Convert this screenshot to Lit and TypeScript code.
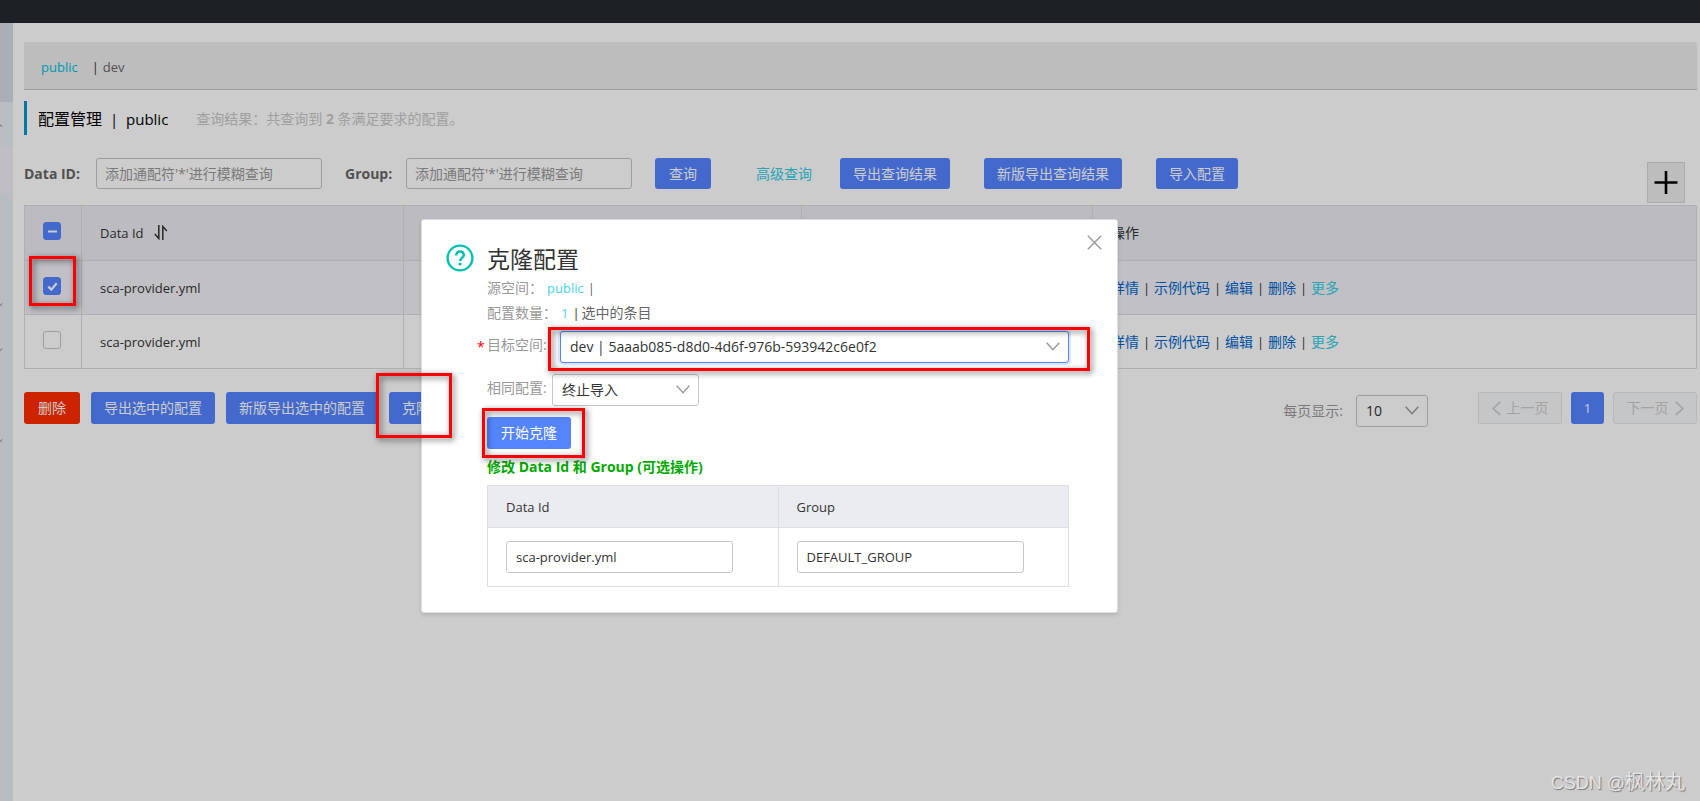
import { LitElement, html, css, svg } from "lit";
import { customElement, property, state } from "lit/decorators.js";

@customElement("drop-down")
class DropDown extends LitElement {
  @property() label = "";
  @property() value = "";
  @property({ type: Boolean, reflect: true }) active = false;

  static styles = css`
    :host {
      display: block;
      position: relative;
      height: 32px;
      box-sizing: border-box;
    }
    .field {
      width: 100%;
      height: 100%;
      box-sizing: border-box;
      appearance: none;
      border: 1px solid #c4c6cf;
      border-radius: 3px;
      background: #fff;
      color: #333;
      padding: 0 32px 0 9px;
      font: inherit;
      outline: none;
    }
    :host([active]) .field {
      border-color: #5584ff;
      box-shadow: 0 0 0 2px rgba(85, 132, 255, 0.2);
    }
    .arrow {
      position: absolute;
      right: 9px;
      top: 50%;
      margin-top: -5px;
      pointer-events: none;
    }
  `;

  render() {
    return html`
      <select class="field" aria-label=${this.label}>
        <option>${this.value}</option>
      </select>
      <svg class="arrow" width="14" height="9" viewBox="0 0 14 9" fill="none" stroke="#999" stroke-width="1.4">
        <path d="M.7.7 7 7.8 13.3.7" />
      </svg>
    `;
  }
}

@customElement("clone-dialog")
class CloneDialog extends LitElement {
  static styles = css`
    :host {
      display: block;
      box-sizing: border-box;
      background: #fff;
      border: 1px solid #dcdee3;
      border-radius: 3px;
      box-shadow: 0 2px 4px rgba(0, 0, 0, 0.12);
      padding: 23px 48px 25px 24px;
    }
    .layout {
      display: flex;
      gap: 13px;
    }
    .icon {
      flex: none;
      margin-top: 1px;
    }
    .content {
      flex: 1;
      min-width: 0;
    }
    .title {
      margin: 0;
      font-size: 23px;
      line-height: 32px;
      font-weight: 400;
      color: #333;
    }
    .row {
      display: flex;
      align-items: center;
      height: 26px;
      color: #666;
    }
    .row.count {
      height: 24px;
    }
    .row.target {
      height: 44px;
    }
    .row.same {
      height: 42px;
    }
    .name {
      color: #999;
      width: 60px;
    }
    .name.wide {
      width: 74px;
    }
    .name.target-name {
      width: 73px;
      padding-bottom: 4px;
    }
    .name.same-name {
      width: 65px;
      padding-bottom: 4px;
    }
    .star {
      width: 10px;
      margin-left: -10px;
      color: #f00;
      font-size: 14px;
    }
    .cyan {
      color: #49d2e7;
      font-size: 13px;
      margin-right: 4px;
    }
    .bar {
      width: 9px;
      font-size: 13px;
    }
    .bar.dark {
      color: #333;
    }
    .grow {
      flex: 1;
      font-size: 14px;
    }
    .short {
      width: 147px;
    }
    .primary {
      display: block;
      height: 32px;
      margin-top: 6px;
      padding: 0 14px;
      border: 0;
      border-radius: 3px;
      background: #5584ff;
      color: #fff;
      font: inherit;
    }
    .note {
      height: 36px;
      line-height: 36px;
      font-weight: 700;
      color: #0a0;
    }
    .grid {
      width: 100%;
      table-layout: fixed;
      border-collapse: collapse;
      font-size: 13px;
      color: #333;
    }
    .grid th,
    .grid td {
      border: 1px solid #dcdee3;
      padding: 0 18px;
      text-align: left;
      font-weight: 400;
    }
    .grid th {
      height: 41px;
      background: #ebecf0;
    }
    .grid td {
      height: 58px;
    }
    .text {
      display: block;
      box-sizing: border-box;
      width: 227px;
      height: 32px;
      border: 1px solid #c4c6cf;
      border-radius: 3px;
      padding: 0 9px;
      color: #333;
      font: inherit;
    }
    .close {
      position: absolute;
      top: 15px;
      right: 15px;
      width: 15px;
      height: 15px;
      padding: 0;
      border: 0;
      background: none;
    }
    .close svg {
      display: block;
    }
  `;

  render() {
    return html`
      <button class="close" aria-label="关闭">
        <svg width="15" height="15" viewBox="0 0 15 15" stroke="#999" stroke-width="1.4">
          <path d="M.8.8 14.2 14.2M14.2.8.8 14.2" />
        </svg>
      </button>
      <div class="layout">
        <svg class="icon" width="28" height="28" viewBox="0 0 28 28" fill="none" stroke="#00c1b6">
          <circle cx="14" cy="14" r="12.4" stroke-width="2.4" />
          <path d="M10.2 11.4c0-2.4 1.6-3.9 3.8-3.9s3.8 1.5 3.8 3.5c0 2.8-3.6 2.9-3.6 6" stroke-width="2.5" />
          <circle cx="14.1" cy="20" r="1.6" fill="#00c1b6" stroke="none" />
        </svg>
        <div class="content">
          <h2 class="title">克隆配置</h2>
          <div class="row">
            <span class="name">源空间：</span><span class="cyan">public</span><span class="bar">|</span>
          </div>
          <div class="row count">
            <span class="name wide">配置数量：</span><span class="cyan">1</span><span class="bar dark">|</span>
            <span>选中的条目</span>
          </div>
          <div class="row target">
            <span class="star">*</span><span class="name target-name">目标空间:</span>
            <drop-down class="grow" active label="目标空间" value="dev | 5aaab085-d8d0-4d6f-976b-593942c6e0f2"></drop-down>
          </div>
          <div class="row same">
            <span class="name same-name">相同配置:</span>
            <drop-down class="short" label="相同配置" value="终止导入"></drop-down>
          </div>
          <button class="primary">开始克隆</button>
          <div class="note">修改 Data Id 和 Group (可选操作)</div>
          <table class="grid">
            <thead>
              <tr><th>Data Id</th><th>Group</th></tr>
            </thead>
            <tbody>
              <tr>
                <td><input class="text" aria-label="Data Id" .value=${"sca-provider.yml"} /></td>
                <td><input class="text" aria-label="Group" .value=${"DEFAULT_GROUP"} /></td>
              </tr>
            </tbody>
          </table>
        </div>
      </div>
    `;
  }
}

@customElement("app-root")
class AppRoot extends LitElement {
  @state() rows = [
    { id: "sca-provider.yml", checked: true },
    { id: "sca-provider.yml", checked: false },
  ];

  static styles = css`
    :host {
      display: flex;
      flex-direction: column;
      position: relative;
      min-height: 100vh;
      overflow: hidden;
      background: #fff;
      color: #333;
      font: 14px/20px "Open Sans", "Noto Sans CJK SC", sans-serif;
    }
    .top {
      height: 23px;
      background: #252a2f;
    }
    .body {
      flex: 1;
      display: flex;
    }
    .side {
      flex: none;
      width: 13px;
      background: #e6edf1;
    }
    .band {
      height: 45px;
      background: #e7eef2;
    }
    .band.head {
      height: 79px;
      background: #d4dbe2;
    }
    .band.current {
      height: 46px;
      background: #f0eef4;
    }
    .caret {
      position: absolute;
      left: 0;
    }
    .main {
      flex: 1;
      min-width: 0;
      padding: 19px 3px 0 11px;
    }
    .spaces {
      display: flex;
      align-items: center;
      box-sizing: border-box;
      height: 48px;
      padding: 3px 17px 0;
      background: #ededed;
      border-bottom: 1px solid #c7c7c7;
      font-size: 13px;
    }
    .spaces a {
      color: #666;
      text-decoration: none;
    }
    .spaces .on {
      color: #00c1de;
      margin-right: 14px;
    }
    .spaces .bar {
      width: 11px;
      color: #333;
    }
    .heading {
      display: flex;
      align-items: center;
      box-sizing: border-box;
      height: 34px;
      margin: 11px 0 23px;
      padding: 2px 0 0 11px;
      border-left: 3px solid #09c;
    }
    .heading h1 {
      display: flex;
      margin: 0;
      font-size: 16px;
      line-height: 24px;
      font-weight: 400;
      color: #000;
    }
    .heading .bar {
      width: 24px;
      text-align: center;
      font-size: 15px;
    }
    .heading .space {
      font-size: 15px;
    }
    .result {
      margin-left: 28px;
      color: #c8c8c8;
    }
    .search {
      display: flex;
      align-items: center;
      height: 31px;
      margin-bottom: 16px;
    }
    .search label {
      font-weight: 700;
      color: #666;
      width: 72px;
    }
    .search .group {
      width: 61px;
      margin-left: 23px;
    }
    .search input {
      box-sizing: border-box;
      width: 226px;
      height: 31px;
      padding: 0 8px;
      border: 1px solid #c4c6cf;
      border-radius: 3px;
      font: inherit;
      background: #fff;
    }
    .search input::placeholder {
      color: #999;
    }
    .btn {
      height: 32px;
      padding: 0 13px;
      border: 0;
      border-radius: 3px;
      background: #5584ff;
      color: #fff;
      font: inherit;
      white-space: nowrap;
    }
    .search .btn {
      height: 31px;
    }
    .search .query {
      padding: 0 14px;
      margin-left: 23px;
    }
    .more-link {
      color: #33cde5;
      text-decoration: none;
      margin: 0 28px 0 45px;
    }
    .search .wide-gap {
      margin-left: 34px;
    }
    .btn.danger {
      padding: 0 14px;
      background: #ff2d00;
    }
    .add {
      box-sizing: border-box;
      width: 38px;
      height: 41px;
      margin: 18px 12px 0 auto;
      padding: 0;
      display: grid;
      place-items: center;
      border: 1px solid #d6d6d6;
      background: #ededed;
    }
    .list {
      width: 100%;
      table-layout: fixed;
      border-collapse: collapse;
      font-size: 13px;
    }
    .list th,
    .list td {
      border: 1px solid #dcdcdf;
      padding: 0 18px;
      height: 53px;
      text-align: left;
      font-weight: 400;
      white-space: nowrap;
    }
    .list th {
      height: 54px;
      background: #ebecf0;
    }
    .list .picked td {
      background: #f2f1f7;
    }
    .c1 {
      width: 57px;
    }
    .c2 {
      width: 322px;
    }
    .c3 {
      width: 398px;
    }
    .c4 {
      width: 291px;
    }
    .sort {
      margin-left: 7px;
      vertical-align: -2px;
    }
    .box {
      appearance: none;
      display: block;
      box-sizing: border-box;
      width: 18px;
      height: 18px;
      margin: 0 0 4px;
      border: 1px solid #c4c6cf;
      border-radius: 3px;
      background: #fff;
    }
    .tick {
      display: grid;
    }
    .tick > * {
      grid-area: 1 / 1;
    }
    .tick svg {
      pointer-events: none;
    }
    .box:checked,
    .box:indeterminate {
      border-color: #5584ff;
      background: #5584ff;
    }
    .ops {
      display: flex;
      font-size: 14px;
    }
    .ops a {
      color: #06c;
      text-decoration: none;
    }
    .ops .more {
      color: #33cde5;
    }
    .ops span {
      width: 15px;
      text-align: center;
      font-size: 13px;
    }
    .ops-head {
      font-size: 14px;
    }
    .footer {
      display: flex;
      gap: 11px;
      margin-top: 23px;
    }
    .pager {
      display: flex;
      gap: 9px;
      margin-left: auto;
    }
    .size {
      display: flex;
      align-items: center;
      gap: 13px;
      height: 32px;
      margin: 3px 41px 0 0;
      color: #999;
    }
    .size drop-down {
      width: 72px;
      font-size: 14px;
    }
    .turn {
      display: flex;
      align-items: center;
      justify-content: center;
      gap: 6px;
      box-sizing: border-box;
      width: 84px;
      height: 32px;
      padding: 0;
      border: 1px solid #e6e7eb;
      border-radius: 3px;
      background: #f7f8fa;
      color: #ccc;
      font: inherit;
    }
    .page {
      width: 33px;
      padding: 0;
      font-size: 13px;
    }
    .mask {
      position: absolute;
      inset: 0;
      background: rgba(0, 0, 0, 0.2);
    }
    .dialog {
      position: absolute;
      left: 421px;
      top: 219px;
      width: 697px;
    }
    .mark {
      position: absolute;
      box-sizing: border-box;
      border: 3px solid #f00;
      filter: drop-shadow(2px 2px 3px rgba(0, 0, 0, 0.6));
      pointer-events: none;
    }
    .m1 {
      left: 29px;
      top: 256px;
      width: 47px;
      height: 50px;
    }
    .m2 {
      left: 376px;
      top: 373px;
      width: 76px;
      height: 65px;
    }
    .m3 {
      left: 548px;
      top: 327px;
      width: 542px;
      height: 44px;
    }
    .m4 {
      left: 482px;
      top: 408px;
      width: 103px;
      height: 50px;
    }
    .credit {
      position: absolute;
      right: 15px;
      bottom: 5px;
      font: 18px/26px "Liberation Sans", "Noto Sans CJK SC", sans-serif;
      color: #e4e4e4;
      text-shadow: 1px 1px 1px #777;
    }
    .credit span {
      font-size: 20px;
    }
  `;

  private caret(y: number, up = false) {
    return html`<svg class="caret" style="top:${y}px" width="3" height="4" viewBox="0 0 3 4" fill="none" stroke="#777">
      ${up ? svg`<path d="M0 .5 2 2.8" />` : svg`<path d="M2 .5 0 2.8" />`}
    </svg>`;
  }

  private ops() {
    return html`<div class="ops">
      <a href="#">详情</a><span>|</span><a href="#">示例代码</a><span>|</span><a href="#">编辑</a><span>|</span
      ><a href="#">删除</a><span>|</span><a class="more" href="#">更多</a>
    </div>`;
  }

  render() {
    return html`
      <header class="top"></header>
      <div class="body">
        <aside class="side">
          <div class="band head"></div>
          <div class="band"></div>
          <div class="band current"></div>
          ${this.caret(124, true)} ${this.caret(303)} ${this.caret(348)} ${this.caret(439)}
        </aside>
        <main class="main">
          <nav class="spaces">
            <a class="on" href="#">public</a><span class="bar">|</span><a href="#">dev</a>
          </nav>
          <div class="heading">
            <h1>配置管理<span class="bar">|</span><span class="space">public</span></h1>
            <span class="result">查询结果：共查询到 <b>2</b> 条满足要求的配置。</span>
          </div>
          <div class="search">
            <label for="data-id">Data ID:</label>
            <input id="data-id" placeholder="添加通配符'*'进行模糊查询" />
            <label class="group" for="group">Group:</label>
            <input id="group" placeholder="添加通配符'*'进行模糊查询" />
            <button class="btn query">查询</button>
            <a class="more-link" href="#">高级查询</a>
            <button class="btn">导出查询结果</button>
            <button class="btn wide-gap">新版导出查询结果</button>
            <button class="btn wide-gap">导入配置</button>
            <button class="add" aria-label="新建配置">
              <svg width="24" height="24" viewBox="0 0 24 24" stroke="#000" stroke-width="2.6">
                <path d="M.5 11.5h23M12 0v23" />
              </svg>
            </button>
          </div>
          <table class="list">
            <colgroup>
              <col class="c1" /><col class="c2" /><col class="c3" /><col class="c4" /><col />
            </colgroup>
            <thead>
              <tr>
                <th>
                  <div class="tick">
                    <input class="box" type="checkbox" aria-label="全选" .indeterminate=${true} />
                    <svg width="18" height="18"><path d="M5 9.5h9" stroke="#fff" stroke-width="2" /></svg>
                  </div>
                </th>
                <th>
                  Data Id
                  <svg class="sort" width="14" height="15" viewBox="0 0 14 15" fill="none" stroke="#333" stroke-width="1.5">
                    <path d="M4.8 0v13.5L.8 9M8.8 15V1.5l4 4.5" />
                  </svg>
                </th>
                <th></th>
                <th></th>
                <th class="ops-head">操作</th>
              </tr>
            </thead>
            <tbody>
              ${this.rows.map(
                (r) => html`<tr class=${r.checked ? "picked" : ""}>
                  <td>
                    <div class="tick">
                      <input class="box" type="checkbox" aria-label=${r.id} .checked=${r.checked} />
                      ${r.checked
                        ? html`<svg width="18" height="18" fill="none" stroke="#fff" stroke-width="2.2">
                            <path d="M5.3 9.6 8.3 12.6 13.7 6.2" />
                          </svg>`
                        : ""}
                    </div>
                  </td>
                  <td>${r.id}</td>
                  <td></td>
                  <td></td>
                  <td>${this.ops()}</td>
                </tr>`
              )}
            </tbody>
          </table>
          <div class="footer">
            <button class="btn danger">删除</button>
            <button class="btn">导出选中的配置</button>
            <button class="btn">新版导出选中的配置</button>
            <button class="btn">克隆</button>
            <div class="pager">
              <div class="size">每页显示:<drop-down label="每页显示" value="10"></drop-down></div>
              <button class="turn">
                <svg width="9" height="15" viewBox="0 0 9 15" fill="none" stroke="#ccc" stroke-width="1.6">
                  <path d="M8.2.8 1.2 7.5l7 6.7" />
                </svg>
                上一页
              </button>
              <button class="btn page">1</button>
              <button class="turn">
                下一页
                <svg width="9" height="15" viewBox="0 0 9 15" fill="none" stroke="#ccc" stroke-width="1.6">
                  <path d="M.8.8l7 6.7-7 6.7" />
                </svg>
              </button>
            </div>
          </div>
        </main>
      </div>
      <div class="mask"></div>
      <clone-dialog class="dialog" role="dialog" aria-label="克隆配置"></clone-dialog>
      <div class="mark m1"></div>
      <div class="mark m2"></div>
      <div class="mark m3"></div>
      <div class="mark m4"></div>
      <div class="credit">CSDN @<span>枫林丸</span></div>
    `;
  }
}
